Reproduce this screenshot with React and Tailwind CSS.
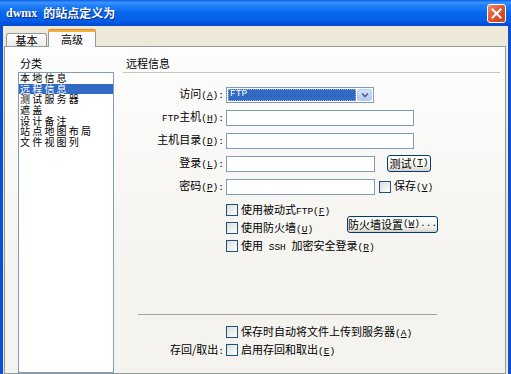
import React from 'react';

// latin bits in the labels look like SimSun's half-width serif glyphs
const M = ({ children }) => (
    <span className="font-['Liberation_Mono',monospace] text-[9.5px]">{children}</span>
);

const Acc = ({ k }) => (
    <M>(<span className="underline">{k}</span>)</M>
);

const Check = () => (
    <span className="w-[12px] h-[12px] shrink-0 border border-[#1c5180] bg-[linear-gradient(135deg,#dcdcd7,#ffffff)]" />
);

const XpButton = ({ className, children }) => (
    <div className={`h-[17px] flex items-center justify-center whitespace-nowrap rounded-[3px] border border-[#003c74] bg-[linear-gradient(to_bottom,#ffffff,#f0f0ea_70%,#d6d0c5)] ${className}`}>
        {children}
    </div>
);

const Row = ({ label, children, className = 'h-[23px]' }) => (
    <div className={`flex items-center ${className}`}>
        <div className="w-[101px] text-right whitespace-nowrap">{label}</div>
        <div className="ml-[2px] flex items-center">{children}</div>
    </div>
);

const Input = ({ w }) => (
    <div className={`${w} h-[16px] border border-[#7f9db9] bg-white`} />
);

const categories = ['本地信息', '远程信息', '测试服务器', '遮盖', '设计备注', '站点地图布局', '文件视图列'];

export default function App() {
    return (
        <div className="w-[511px] h-[374px] overflow-hidden flex flex-col bg-[#0a4fd6] font-['Noto_Sans_CJK_SC',sans-serif] text-[11px] text-black">
            {/* title bar */}
            <div className="h-[26px] shrink-0 flex items-center px-[6px] bg-[linear-gradient(to_bottom,#0a5fe8_0%,#3c93fb_10%,#1f7ff8_22%,#0868ee_50%,#055ce6_80%,#0349cf_100%)]">
                <div className="flex items-center gap-[6px] text-white font-bold text-[12px] [text-shadow:1px_1px_0_#0a2a8a]">
                    <span className="font-['Liberation_Serif',serif] text-[12px]">dwmx</span>
                    <span>的站点定义为</span>
                </div>
                <div className="ml-auto mr-[-1px] w-[19px] h-[19px] rounded-[3px] border border-white bg-[linear-gradient(135deg,#f08a6c,#e0532c_50%,#c8401c)] flex items-center justify-center">
                    <svg width="11" height="11" viewBox="0 0 11 11">
                        <path d="M1.5 1.5 L9.5 9.5 M9.5 1.5 L1.5 9.5" stroke="white" strokeWidth="2" strokeLinecap="square" />
                    </svg>
                </div>
            </div>

            {/* client area */}
            <div className="flex-1 mx-[3px] bg-[#ece9d8] flex flex-col min-h-0">
                <div className="h-[20px] shrink-0 flex items-end pl-[3px] relative">
                    <div className="h-[13px] w-[41px] border border-b-0 border-[#919b9c] rounded-t-[3px] bg-[linear-gradient(to_bottom,#ffffff,#ecebe5)] flex items-center justify-center leading-none">
                        基本
                    </div>
                    <div className="h-[18px] w-[48px] ml-[1px] -mb-[1px] relative z-10 border border-b-0 border-[#919b9c] rounded-t-[3px] bg-[#fcfcfe] flex items-center justify-center leading-none">
                        <div className="absolute -top-[1px] -left-[1px] -right-[1px] h-[3px] rounded-t-[3px] bg-[#f6b13c] border-t border-[#e68b2c]" />
                        <span className="mt-[2px]">高级</span>
                    </div>
                </div>

                {/* tab panel */}
                <div className="flex-1 ml-[1px] mr-[2px] border border-[#919b9c] bg-[linear-gradient(to_bottom,#fdfdfd,#f4f3ee_70%)] flex min-h-0">
                    {/* categories */}
                    <div className="w-[118px] pl-[13px] pt-[9px] flex flex-col">
                        <div className="h-[15px] leading-[15px] pl-[2px]">分类</div>
                        <div className="mt-[1px] w-[96px] h-[320px] border border-[#7f9db9] bg-white text-[10px] tracking-[2.2px] leading-[10.7px]">
                            {categories.map((c, i) => (
                                <div
                                    key={c}
                                    className={`h-[10.7px] pl-[1px] whitespace-nowrap ${i === 1 ? 'bg-[#316ac5] text-white' : ''}`}
                                >
                                    {c}
                                </div>
                            ))}
                        </div>
                    </div>

                    {/* remote info */}
                    <div className="flex-1 pt-[9px] pr-[5px] flex flex-col">
                        <div className="h-[17px] leading-[15px] border-b border-[#c5c5bc] pl-[3px]">远程信息</div>

                        <div className="mt-[10px] flex flex-col">
                            <Row label={<>访问<Acc k="A" /><M>:</M></>}>
                                <div className="w-[148px] h-[16px] border border-[#7f9db9] bg-white flex items-center p-[1px]">
                                    <div className="flex-1 h-full bg-[#316ac5] outline-1 outline-dotted outline-[#9db5e3] -outline-offset-1 text-white flex items-center pl-[2px]">
                                        <M>FTP</M>
                                    </div>
                                    <div className="w-[15px] h-full ml-[1px] rounded-[2px] border border-[#b9cef5] bg-[linear-gradient(to_bottom,#d4e2fc,#b4c8f6)] flex items-center justify-center">
                                        <svg width="8" height="6" viewBox="0 0 8 6">
                                            <path d="M1 1.5 L4 4.5 L7 1.5" fill="none" stroke="#4d6185" strokeWidth="1.6" />
                                        </svg>
                                    </div>
                                </div>
                            </Row>
                            <Row label={<><M>FTP</M>主机<Acc k="H" /><M>:</M></>}>
                                <Input w="w-[188px]" />
                            </Row>
                            <Row label={<>主机目录<Acc k="D" /><M>:</M></>}>
                                <Input w="w-[188px]" />
                            </Row>
                            <Row label={<>登录<Acc k="L" /><M>:</M></>}>
                                <Input w="w-[149px]" />
                                <XpButton className="w-[44px] ml-[12px]">
                                    测试<Acc k="T" />
                                </XpButton>
                            </Row>
                            <Row label={<>密码<Acc k="P" /><M>:</M></>}>
                                <Input w="w-[149px]" />
                                <div className="ml-[4px] flex items-center gap-[3px]">
                                    <Check />
                                    <span>保存<Acc k="V" /></span>
                                </div>
                            </Row>
                        </div>

                        <div className="mt-[3px] flex flex-col">
                            <Row label="" className="h-[18px]">
                                <Check />
                                <span className="ml-[3px] whitespace-nowrap">使用被动式<M>FTP</M><Acc k="F" /></span>
                            </Row>
                            <Row label="" className="h-[18px]">
                                <div className="w-[121px] flex items-center">
                                    <Check />
                                    <span className="ml-[3px] whitespace-nowrap">使用防火墙<Acc k="U" /></span>
                                </div>
                                <XpButton className="w-[91px] -mt-[8px]">
                                    防火墙设置<Acc k="W" /><M>...</M>
                                </XpButton>
                            </Row>
                            <Row label="" className="h-[18px]">
                                <Check />
                                <span className="ml-[3px] whitespace-nowrap">使用<M> SSH </M>加密安全登录<Acc k="R" /></span>
                            </Row>
                        </div>

                        <div className="mt-[59px] ml-[15px] w-[299px] border-t border-[#a0a0a0]" />

                        <div className="mt-[8px] flex flex-col">
                            <Row label="" className="h-[18px]">
                                <Check />
                                <span className="ml-[3px] whitespace-nowrap">保存时自动将文件上传到服务器<Acc k="A" /></span>
                            </Row>
                            <Row label={<>存回/取出<M>:</M></>} className="h-[18px]">
                                <Check />
                                <span className="ml-[3px] whitespace-nowrap">启用存回和取出<Acc k="E" /></span>
                            </Row>
                        </div>
                    </div>
                </div>
            </div>
        </div>
    );
}
